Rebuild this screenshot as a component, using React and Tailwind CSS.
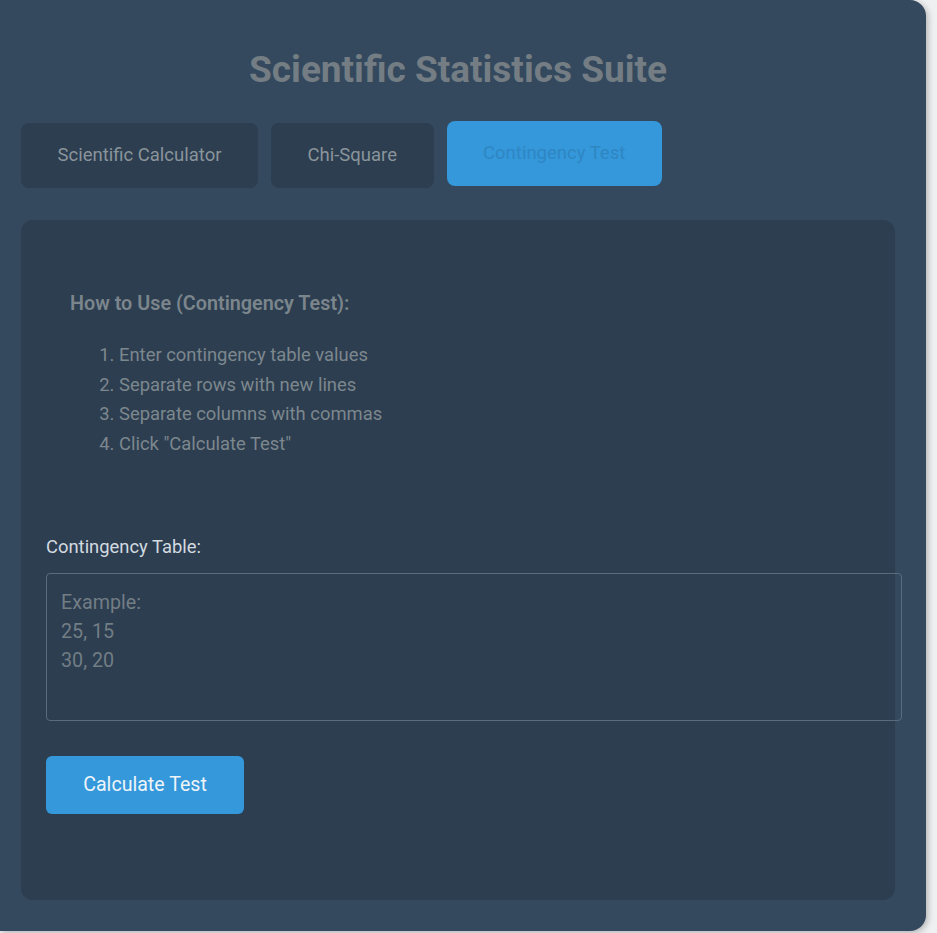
import React, { useState } from 'react';

const tabs = ['Scientific Calculator', 'Chi-Square', 'Contingency Test'];

const steps = [
  'Enter contingency table values',
  'Separate rows with new lines',
  'Separate columns with commas',
  'Click "Calculate Test"',
];

export default function App() {
  const [active, setActive] = useState(2);
  const [table, setTable] = useState('');

  return (
    <div className="min-h-screen bg-[#eef0f2] font-['Roboto',sans-serif]">
      <div className="w-[926px] h-[931px] bg-[#34495e] rounded-r-[16px] shadow-[2px_2px_6px_rgba(0,0,0,0.25)] pl-[21px] pr-[31px] pt-[48px]">
        {/* Header */}
        <h1 className="text-center text-[37px] leading-[44px] font-bold text-[#737d83]">
          Scientific Statistics Suite
        </h1>

        {/* Tabs */}
        <div className="flex items-start gap-[13px] mt-[31px]">
          {tabs.map((t, i) => (
            <button
              key={t}
              onClick={() => setActive(i)}
              className={
                i === active
                  ? 'bg-[#3498db] text-[#2f86c2] text-[18.5px] leading-[23px] px-[36.5px] py-[21px] rounded-[8px] -mt-[2px]'
                  : 'bg-[#2c3e50] text-[#8a949b] text-[18.5px] leading-[23px] px-[36.5px] py-[21px] rounded-[8px]'
              }
            >
              {t}
            </button>
          ))}
        </div>

        {/* Panel */}
        <div className="mt-[32px] h-[680px] bg-[#2c3e50] rounded-[12px] px-[25px] pt-[25px]">
          <div className="mt-[24px] p-[24px] mb-[55px]">
            <h3 className="text-[19.8px] leading-[22px] font-semibold text-[#7b858c] mb-[25px]">
              How to Use (Contingency Test):
            </h3>
            <ol className="list-decimal pl-[49px] text-[18.4px] leading-[29.5px] text-[#7d878e]">
              {steps.map((s) => (
                <li key={s}>{s}</li>
              ))}
            </ol>
          </div>

          <label className="block text-[18.4px] leading-[20px] text-[#d3dae0] mb-[16px]">
            Contingency Table:
          </label>
          <textarea
            value={table}
            onChange={(e) => setTable(e.target.value)}
            placeholder={'Example:\n25, 15\n30, 20'}
            className="block w-[856px] h-[148px] resize-none bg-transparent border border-[#5b6b7b] rounded-[4px] px-[14px] py-[14px] text-[19.7px] leading-[29px] text-[#d3dae0] placeholder:text-[#727d85] focus:outline-none"
          />

          <button className="mt-[35px] w-[198px] h-[58px] bg-[#3498db] text-[#eef4f8] text-[19.6px] rounded-[6px]">
            Calculate Test
          </button>
        </div>
      </div>
    </div>
  );
}
